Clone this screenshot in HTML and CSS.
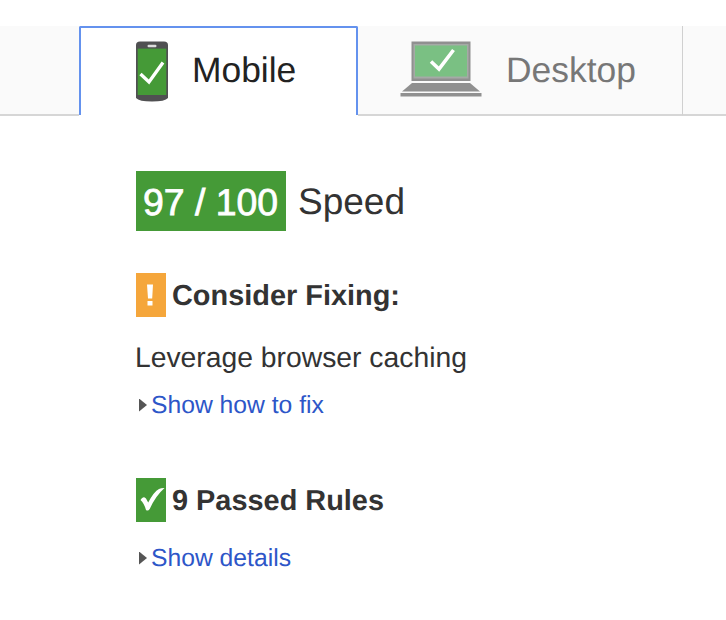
FILE: index.html
```html
<!DOCTYPE html>
<html lang="en">
<head>
<meta charset="utf-8">
<title>Page speed results</title>
<link rel="stylesheet" href="styles.css">
</head>
<body>
<nav class="tabs">
  <div class="spacer"></div>
  <a class="tab active">
    <svg class="phone" width="34" height="62" viewBox="0 0 34 62">
      <path d="M1 5Q1 1.500 5 1.500H29Q33 1.500 33 5V58Q30 61.500 17 61.500Q4 61.500 1 58Z" fill="#505052"/>
      <rect x="2.700" y="8.600" width="28.600" height="46.400" fill="#459a37"/>
      <rect x="12.500" y="4.700" width="9" height="2.600" rx="1.200" fill="#ddd"/>
      <path d="M5.500 34L14 42L28 22.500" fill="none" stroke="#fff" stroke-width="3.300"/>
    </svg>
    <span>Mobile</span>
  </a>
  <a class="tab desktop">
    <svg class="laptop" width="82" height="56" viewBox="0 0 82 56">
      <rect x="11.500" y="0.500" width="59" height="39.500" fill="#909090"/>
      <rect x="13.500" y="3" width="55" height="34.500" fill="#a5aaa6"/>
      <rect x="15" y="4.500" width="52" height="31" fill="#7ac083"/>
      <path d="M31 20.500L39 28L53.500 9" fill="none" stroke="#fff" stroke-width="3.600"/>
      <path d="M12 42H70L80 50.500H2Z" fill="#909090"/>
      <rect x="0.500" y="52" width="81" height="3.500" fill="#909090"/>
    </svg>
    <span>Desktop</span>
  </a>
  <div class="rest"></div>
</nav>
<main>
  <div class="score"><span class="badge">97 / 100</span><span class="speed">Speed</span></div>
  <h2 class="consider"><span class="mark warn"><svg width="30" height="44" viewBox="0 0 30 44"><path d="M11 11.500H17L16.200 25.500H12ZM11.500 28H16.500V32.500H11.500Z" fill="#fff"/></svg></span><span>Consider Fixing:</span></h2>
  <p class="rule">Leverage browser caching</p>
  <a class="link fix"><i class="arrow"></i><span>Show how to fix</span></a>
  <h2 class="passed"><span class="mark ok"><svg width="30" height="44" viewBox="0 0 30 44"><path d="M4.500 22Q7 17.500 10 20.500L12.200 24.500Q18 13.500 23 11Q25.500 9.800 28.500 10Q19.500 18 13.700 31Q12 33.500 10 32Q8 25 4.500 22Z" fill="#fff"/></svg></span><span>9 Passed Rules</span></h2>
  <a class="link details"><i class="arrow"></i><span>Show details</span></a>
</main>
</body>
</html>
```
FILE: styles.css
```css
* { box-sizing: border-box; }
body {
  margin: 0;
  background: #fff;
  color: #333;
  font-family: "Liberation Sans", Arial, sans-serif;
  text-rendering: geometricPrecision;
  overflow: hidden;
}
.tabs {
  display: flex;
  height: 90px;
  margin-top: 26px;
  font-size: 35.4px;
  line-height: 40px;
}
.spacer, .desktop, .rest {
  background: #fafafa;
  border-bottom: 2px solid #d6d6d6;
}
.spacer { width: 79px; }
.tab { display: flex; align-items: flex-start; }
.tab span { margin-top: 24px; }
.active {
  width: 279px;
  height: 89px;
  padding-left: 54px;
  border: 2px solid #6492ee;
  border-bottom: 0;
  border-radius: 2px 2px 0 0;
  color: #222;
}
.active span { margin: 22px 0 0 23px; }
.phone { margin-top: 12px; }
.desktop {
  width: 325px;
  padding-left: 42px;
  border-right: 1px solid #d0d0d0;
  color: #777;
}
.desktop span { margin-left: 24px; }
.laptop { margin-top: 15px; }
.rest { flex: 1; }
main { padding: 55px 0 0 136px; }
.score { display: flex; height: 60px; line-height: 62px; }
.badge {
  width: 150px;
  padding-left: 7px;
  background: #459a37;
  color: #fff;
  font-size: 37.4px;
  white-space: nowrap;
  -webkit-text-stroke: 0.8px #fff;
}
.speed { margin-left: 12px; font-size: 37px; }
h2 {
  display: flex;
  height: 44px;
  margin: 42px 0 0;
  font-size: 28.9px;
  line-height: 46px;
}
.mark { width: 30px; height: 44px; margin-right: 6px; }
.mark svg { display: block; }
.warn { background: #f5a63b; }
.ok { background: #459a37; }
.rule { margin: 24px 0 0 -1px; font-size: 28.3px; line-height: 32px; }
.link {
  display: flex;
  align-items: center;
  height: 28px;
  padding-left: 3px;
  color: #2d56c8;
  font-size: 24.7px;
  line-height: 28px;
}
.link span { margin-top: 2px; }
.fix { margin-top: 18px; }
.arrow {
  width: 8px;
  height: 13px;
  margin-right: 4px;
  background: #555;
  clip-path: polygon(0 0, 100% 50%, 0 100%);
}
.passed { margin-top: 59px; }
.details { margin-top: 22px; }
```
